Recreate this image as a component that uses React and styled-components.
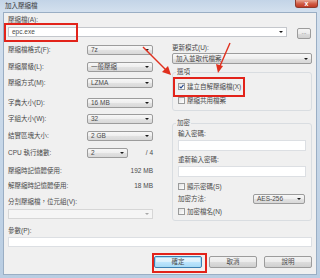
import styled, { createGlobalStyle } from 'styled-components'

const leftRows = [
  { label: '壓縮檔格式(F):', value: '7z', top: 3 },
  { label: '壓縮層級(L):', value: '一般壓縮', top: 7 },
  { label: '壓縮方式(M):', value: 'LZMA', top: 6 },
  { label: '字典大小(D):', value: '16 MB', top: 10 },
  { label: '字組大小(W):', value: '32', top: 6 },
  { label: '結實區塊大小:', value: '2 GB', top: 7 },
]

const memoryRows = [
  { label: '壓縮時記憶體使用:', value: '192 MB', top: 9 },
  { label: '解壓縮時記憶體使用:', value: '18 MB', top: 7 },
]

// red annotation boxes drawn over the screenshot
const marks = [
  { x: 4, y: 23, w: 74, h: 19 },
  { x: 173, y: 77, w: 72, h: 20 },
  { x: 152, y: 253, w: 55, h: 20 },
]

export default function App() {
  return (
    <>
      <GlobalStyle />
      <Window>
        <TitleBar>
          <Title>加入壓縮檔</Title>
          <CloseButton>x</CloseButton>
        </TitleBar>
        <Client>
          <Label>壓縮檔(A):</Label>
          <ArchiveRow>
            <Combo $width="279px" $variant="edit">epc.exe</Combo>
            <SmallButton>...</SmallButton>
          </ArchiveRow>

          <Columns>
            <Column>
              {leftRows.map((row, index) => (
                <Row key={`left_${index}`} $top={row.top}>
                  <RowLabel>{row.label}</RowLabel>
                  <Combo $width="66px">{row.value}</Combo>
                </Row>
              ))}
              <Row $top={7}>
                <RowLabel>CPU 執行緒數:</RowLabel>
                <Combo $width="41px">2</Combo>
                <Value>/ 4</Value>
              </Row>
              {memoryRows.map((row, index) => (
                <InfoRow key={`mem_${index}`} $top={row.top}>
                  <span>{row.label}</span>
                  <span>{row.value}</span>
                </InfoRow>
              ))}
              <Label $top={8}>分割壓縮檔，位元組(V):</Label>
              <Combo $width="145px" $variant="disabled" $top={3} />
            </Column>

            <Column>
              <Label $top={2}>更新模式(U):</Label>
              <Combo $width="140px" $height="11px" $top={1}>加入並取代檔案</Combo>

              <Group $top={4}>
                <Legend>選項</Legend>
                <CheckRow $top={6}>
                  <CheckBox $checked>
                    <svg width="5" height="5" viewBox="0 0 5 5">
                      <polyline points="0.6,2.6 2,4 4.5,0.8" fill="none" stroke="#1b3f8b" strokeWidth="1.1" />
                    </svg>
                  </CheckBox>
                  建立自解壓縮檔(X)
                </CheckRow>
                <CheckRow $top={5}>
                  <CheckBox />
                  壓縮共用檔案
                </CheckRow>
              </Group>

              <Group $top={8} $bottom={4}>
                <Legend>加密</Legend>
                <Label $top={3}>輸入密碼:</Label>
                <TextBox $top={2} />
                <Label $top={5}>重新輸入密碼:</Label>
                <TextBox $top={2} />
                <CheckRow $top={5}>
                  <CheckBox />
                  顯示密碼(S)
                </CheckRow>
                <Row $top={3}>
                  <RowLabel $width="75px">加密方法:</RowLabel>
                  <Combo $width="52px">AES-256</Combo>
                </Row>
                <CheckRow $top={3}>
                  <CheckBox />
                  加密檔名(N)
                </CheckRow>
              </Group>
            </Column>
          </Columns>

          <Label $top={6}>參數(P):</Label>
          <TextBox $top={2} $height="10px" />

          <ButtonRow>
            <PushButton $default>確定</PushButton>
            <PushButton>取消</PushButton>
            <PushButton>說明</PushButton>
          </ButtonRow>
        </Client>

        <Overlay>
          {marks.map((m, index) => (
            <RedBox key={`mark_${index}`} $x={m.x} $y={m.y} $w={m.w} $h={m.h} />
          ))}
          <svg width="320" height="278" viewBox="0 0 320 278">
            <line x1="143" y1="47" x2="166" y2="70" stroke="#e0301e" strokeWidth="1.4" />
            <polygon points="171,75 162,72 168,66" fill="#e0301e" />
            <line x1="230" y1="43" x2="220" y2="66" stroke="#e0301e" strokeWidth="1.4" />
            <polygon points="218,73 216,64 223,66" fill="#e0301e" />
          </svg>
        </Overlay>
      </Window>
    </>
  )
}

const GlobalStyle = createGlobalStyle`
  html, body {
    margin: 0;
    padding: 0;
    background: #ffffff;
  }
  body {
    font-family: "Liberation Sans", "Noto Sans CJK TC", sans-serif;
    font-size: 6.5px;
    color: #4a4a4a;
  }
`

const Window = styled.div`
  position: relative;
  width: 320px;
  height: 278px;
  box-sizing: border-box;
  padding: 0 3px 3px 3px;
  background: linear-gradient(180deg, #c3d4e7 0px, #d3e0ee 12px, #b9cde2 100%);
  display: flex;
  flex-direction: column;
  overflow: hidden;
`

const TitleBar = styled.div`
  height: 12px;
  display: flex;
  align-items: flex-start;
  justify-content: space-between;
`

const Title = styled.span`
  margin: 2px 0 0 2px;
  line-height: 8px;
  color: #3a3a3a;
`

const CloseButton = styled.span`
  width: 23px;
  height: 8px;
  margin-right: -1px;
  box-sizing: border-box;
  border: 1px solid #8e3a2c;
  border-top: none;
  border-radius: 0 0 3px 3px;
  background: linear-gradient(180deg, #e9a895, #cf5a43 55%, #c13b25);
  color: #ffffff;
  font-size: 7px;
  font-weight: bold;
  line-height: 7px;
  text-align: center;
`

const Client = styled.div`
  flex: 1;
  background: #f0f0f0;
  border: 1px solid #9aaec4;
  padding: 3px 4px 0 4px;
  display: flex;
  flex-direction: column;
`

const Label = styled.div`
  height: 8px;
  line-height: 8px;
  margin-top: ${({ $top }) => $top || 0}px;
  white-space: nowrap;
`

const ArchiveRow = styled.div`
  display: flex;
  align-items: flex-start;
  justify-content: space-between;
  margin-top: 3px;
  height: 12px;
`

const Combo = styled.div`
  position: relative;
  flex: none;
  width: ${({ $width }) => $width};
  height: ${({ $height }) => $height || '10px'};
  margin-top: ${({ $top }) => $top || 0}px;
  box-sizing: border-box;
  padding: 0 8px 0 3px;
  display: flex;
  align-items: center;
  line-height: 8px;
  white-space: nowrap;
  border: 1px solid ${({ $variant }) => ($variant === 'edit' ? '#c4c7cc' : $variant === 'disabled' ? '#d6d6d6' : '#9c9c9c')};
  border-radius: ${({ $variant }) => ($variant === 'edit' || $variant === 'disabled' ? '0' : '2px')};
  background: ${({ $variant }) =>
    $variant === 'edit'
      ? '#ffffff'
      : $variant === 'disabled'
      ? '#f5f5f5'
      : 'linear-gradient(180deg, #f7f7f7 0%, #eeeeee 50%, #e2e2e2 51%, #d8d8d8 100%)'};
  &::after {
    content: '';
    position: absolute;
    right: 3px;
    top: 50%;
    margin-top: -1px;
    border-left: 2px solid transparent;
    border-right: 2px solid transparent;
    border-top: 2px solid ${({ $variant }) => ($variant === 'disabled' ? '#a8a8a8' : '#1a1a1a')};
  }
`

const SmallButton = styled.div`
  width: 14px;
  height: 11px;
  margin: 1px 1px 0 0;
  box-sizing: border-box;
  border: 1px solid #9c9c9c;
  border-radius: 2px;
  background: linear-gradient(180deg, #f4f4f4 0%, #ebebeb 50%, #dddddd 51%, #d0d0d0 100%);
  font-size: 6px;
  line-height: 6px;
  text-align: center;
  color: #555;
`

const Columns = styled.div`
  display: grid;
  grid-template-columns: 145px 140px;
  column-gap: 19px;
  align-items: start;
  margin-top: 3px;
`

const Column = styled.div`
  display: flex;
  flex-direction: column;
`

const Row = styled.div`
  display: flex;
  align-items: center;
  height: 10px;
  margin-top: ${({ $top }) => $top || 0}px;
`

const RowLabel = styled.span`
  flex: none;
  width: ${({ $width }) => $width || '79px'};
  white-space: nowrap;
  line-height: 8px;
`

const Value = styled.span`
  margin-left: auto;
  line-height: 8px;
`

const InfoRow = styled.div`
  display: flex;
  justify-content: space-between;
  height: 8px;
  line-height: 8px;
  margin-top: ${({ $top }) => $top}px;
`

const Group = styled.fieldset`
  margin: ${({ $top }) => $top || 0}px 0 0 0;
  padding: 0 5px ${({ $bottom }) => $bottom ?? 5}px 5px;
  min-inline-size: 0;
  border: 1px solid #d9dde1;
  border-radius: 3px;
  display: flex;
  flex-direction: column;
`

const Legend = styled.legend`
  padding: 0 1px;
  margin-left: -2px;
  line-height: 8px;
  height: 8px;
`

const CheckRow = styled.label`
  display: flex;
  align-items: center;
  gap: 2px;
  height: 9px;
  line-height: 8px;
  white-space: nowrap;
  margin-top: ${({ $top }) => $top || 0}px;
`

const CheckBox = styled.span`
  flex: none;
  width: 7px;
  height: 7px;
  box-sizing: border-box;
  border: 1px solid #9a9b9b;
  background: linear-gradient(135deg, #e2e2e2, #ffffff);
  display: flex;
  align-items: center;
  justify-content: center;
  svg {
    display: ${({ $checked }) => ($checked ? 'block' : 'none')};
  }
`

const TextBox = styled.div`
  height: ${({ $height }) => $height || '11px'};
  margin-top: ${({ $top }) => $top || 0}px;
  box-sizing: border-box;
  border: 1px solid #dcdfe3;
  background: #ffffff;
`

const ButtonRow = styled.div`
  display: flex;
  justify-content: flex-end;
  gap: 7px;
  margin-top: 9px;
`

const PushButton = styled.div`
  width: 48px;
  height: 12px;
  box-sizing: border-box;
  display: flex;
  align-items: center;
  justify-content: center;
  border: 1px solid ${({ $default }) => ($default ? '#3c7fb1' : '#9c9c9c')};
  border-radius: 2px;
  box-shadow: ${({ $default }) => ($default ? 'inset 0 0 0 1px #a9dcf5' : 'none')};
  background: ${({ $default }) =>
    $default
      ? 'linear-gradient(180deg, #eaf6fd 0%, #d9f0fc 50%, #bee6fd 51%, #a7d9f5 100%)'
      : 'linear-gradient(180deg, #f2f2f2 0%, #ebebeb 50%, #dddddd 51%, #cfcfcf 100%)'};
  line-height: 8px;
`

const Overlay = styled.div`
  position: absolute;
  inset: 0;
  pointer-events: none;
  svg {
    position: absolute;
    left: 0;
    top: 0;
  }
`

const RedBox = styled.div`
  position: absolute;
  left: ${({ $x }) => $x}px;
  top: ${({ $y }) => $y}px;
  width: ${({ $w }) => $w}px;
  height: ${({ $h }) => $h}px;
  box-sizing: border-box;
  border: 2px solid #e2231a;
`
